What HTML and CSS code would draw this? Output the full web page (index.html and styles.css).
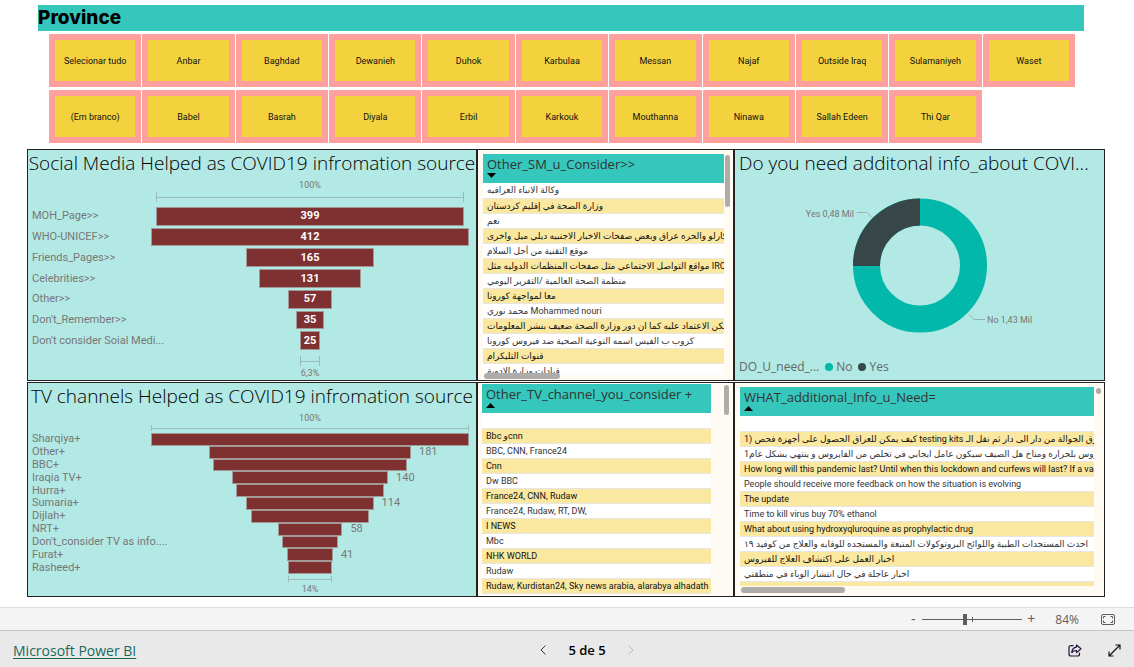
FILE: index.html
```html
<!DOCTYPE html>
<html lang="pt">
<head>
<meta charset="utf-8">
<title>Microsoft Power BI</title>
<link rel="stylesheet" href="styles.css">
</head>
<body>
<main class="report">
  <section class="slicer" aria-labelledby="slicer-title">
    <h1 class="slicer-title" id="slicer-title">Province</h1>
    <div class="tiles">
      <button class="tile">Selecionar tudo</button>
      <button class="tile">Anbar</button>
      <button class="tile">Baghdad</button>
      <button class="tile">Dewanieh</button>
      <button class="tile">Duhok</button>
      <button class="tile">Karbulaa</button>
      <button class="tile">Messan</button>
      <button class="tile">Najaf</button>
      <button class="tile">Outside Iraq</button>
      <button class="tile">Sulamaniyeh</button>
      <button class="tile">Waset</button>
      <button class="tile">(Em branco)</button>
      <button class="tile">Babel</button>
      <button class="tile">Basrah</button>
      <button class="tile">Diyala</button>
      <button class="tile">Erbil</button>
      <button class="tile">Karkouk</button>
      <button class="tile">Mouthanna</button>
      <button class="tile">Ninawa</button>
      <button class="tile">Sallah Edeen</button>
      <button class="tile">Thi Qar</button>
    </div>
  </section>

  <div class="board">
    <div class="column">
      <section class="panel chart">
        <h2 class="chart-title chart-title-center">Social Media Helped as COVID19 infromation source</h2>
        <div class="funnel funnel-social">
          <div class="scale"><span>100%</span><i class="ruler" style="width:96.8%"></i></div>
          <ul class="bars">
            <li><span class="name">MOH_Page&gt;&gt;</span><span class="track"><b class="bar" style="width:96.8%">399</b></span></li>
            <li><span class="name">WHO-UNICEF&gt;&gt;</span><span class="track"><b class="bar" style="width:100%">412</b></span></li>
            <li><span class="name">Friends_Pages&gt;&gt;</span><span class="track"><b class="bar" style="width:40%">165</b></span></li>
            <li><span class="name">Celebrities&gt;&gt;</span><span class="track"><b class="bar" style="width:31.8%">131</b></span></li>
            <li><span class="name">Other&gt;&gt;</span><span class="track"><b class="bar" style="width:13.8%">57</b></span></li>
            <li><span class="name">Don't_Remember&gt;&gt;</span><span class="track"><b class="bar" style="width:8.5%">35</b></span></li>
            <li><span class="name">Don't consider Soial Medi...</span><span class="track"><b class="bar" style="width:6.1%">25</b></span></li>
          </ul>
          <div class="scale"><i class="ruler" style="width:6.1%"></i><span>6,3%</span></div>
        </div>
      </section>

      <section class="panel chart">
        <h2 class="chart-title chart-title-center">TV channels Helped as COVID19 infromation source</h2>
        <div class="funnel funnel-tv">
          <div class="scale"><span>100%</span><i class="ruler" style="width:100%"></i></div>
          <ul class="bars">
            <li><span class="name">Sharqiya+</span><span class="track"><b class="bar" style="width:100%"></b></span></li>
            <li><span class="name">Other+</span><span class="track"><b class="bar" style="width:63.5%"><span class="value">181</span></b></span></li>
            <li><span class="name">BBC+</span><span class="track"><b class="bar" style="width:61%"></b></span></li>
            <li><span class="name">Iraqia TV+</span><span class="track"><b class="bar" style="width:49.1%"><span class="value">140</span></b></span></li>
            <li><span class="name">Hurra+</span><span class="track"><b class="bar" style="width:46.5%"></b></span></li>
            <li><span class="name">Sumaria+</span><span class="track"><b class="bar" style="width:40%"><span class="value">114</span></b></span></li>
            <li><span class="name">Dijlah+</span><span class="track"><b class="bar" style="width:37.2%"></b></span></li>
            <li><span class="name">NRT+</span><span class="track"><b class="bar" style="width:20.4%"><span class="value">58</span></b></span></li>
            <li><span class="name">Don't_consider TV as info....</span><span class="track"><b class="bar" style="width:17.5%"></b></span></li>
            <li><span class="name">Furat+</span><span class="track"><b class="bar" style="width:14.4%"><span class="value">41</span></b></span></li>
            <li><span class="name">Rasheed+</span><span class="track"><b class="bar" style="width:14%"></b></span></li>
          </ul>
          <div class="scale"><i class="ruler" style="width:14%"></i><span>14%</span></div>
        </div>
      </section>
    </div>

    <div class="column">
      <section class="panel list list-sm">
        <div class="viewport">
          <table class="grid">
            <thead><tr><th scope="col"><button class="sort">Other_SM_u_Consider&gt;&gt;<svg width="9" height="5" viewBox="0 0 9 5"><path d="M0 0h9L4.500 5z"/></svg></button></th></tr></thead>
            <tbody>
              <tr><td>وكالة الانباء العراقيه</td></tr>
              <tr><td>وزارة الصحة في إقليم كردستان</td></tr>
              <tr><td>نعم</td></tr>
              <tr><td>كارلو والحره عراق وبعض صفحات الاخبار الاجنبيه ديلي ميل واخرى</td></tr>
              <tr><td>موقع التقنية من أجل السلام</td></tr>
              <tr><td>مواقع التواصل الاجتماعي مثل صفحات المنظمات الدوليه مثل IRC</td></tr>
              <tr><td>منظمة الصحة العالمية /التقرير اليومي</td></tr>
              <tr><td>معا لمواجهة كورونا</td></tr>
              <tr><td>محمد نوري Mohammed nouri</td></tr>
              <tr><td>يمكن الاعتماد عليه كما ان دور وزارة الصحة ضعيف بنشر المعلومات</td></tr>
              <tr><td>كروب ب الفيس اسمه التوعية الصحية ضد فيروس كورونا</td></tr>
              <tr><td>قنوات التليكرام</td></tr>
              <tr><td>قيادات وزارة الادوية</td></tr>
            </tbody>
          </table>
        </div>
        <i class="thumb thumb-v"></i>
        <i class="thumb thumb-h"></i>
      </section>

      <section class="panel list list-tv">
        <div class="viewport">
          <table class="grid">
            <thead><tr><th scope="col"><button class="sort">Other_TV_channel_you_consider +<svg width="9" height="5" viewBox="0 0 9 5"><path d="M0 5h9L4.500 0z"/></svg></button></th></tr></thead>
            <tbody>
              <tr><td></td></tr>
              <tr><td>Bbc وcnn</td></tr>
              <tr><td>BBC, CNN, France24</td></tr>
              <tr><td>Cnn</td></tr>
              <tr><td>Dw BBC</td></tr>
              <tr><td>France24, CNN, Rudaw</td></tr>
              <tr><td>France24, Rudaw, RT, DW,</td></tr>
              <tr><td>I NEWS</td></tr>
              <tr><td>Mbc</td></tr>
              <tr><td>NHK WORLD</td></tr>
              <tr><td>Rudaw</td></tr>
              <tr><td>Rudaw, Kurdistan24, Sky news arabia, alarabya alhadath</td></tr>
            </tbody>
          </table>
        </div>
        <i class="thumb thumb-v"></i>
      </section>
    </div>

    <div class="column">
      <section class="panel chart">
        <h2 class="chart-title">Do you need additonal info_about COVI...</h2>
        <svg class="donut" viewBox="0 0 369 170" role="img" aria-label="No 1,43 Mil, Yes 0,48 Mil">
          <circle cx="185" cy="85" r="53.500" fill="none" stroke="#01b8aa" stroke-width="27"/>
          <path d="M185 18A67 67 0 0 0 118 85.500H145A40 40 0 0 1 185 45z" fill="#374649"/>
          <path d="M122 32h10l5 5M234 134l5 5h11" fill="none" stroke="#8fb5b2"/>
          <text x="119" y="36" text-anchor="end">Yes 0,48 Mil</text>
          <text x="252" y="142">No 1,43 Mil</text>
        </svg>
        <div class="legend">
          <span>DO_U_need_...</span>
          <span class="key"><i class="dot dot-no"></i>No</span>
          <span class="key"><i class="dot dot-yes"></i>Yes</span>
        </div>
      </section>

      <section class="panel list list-need">
        <div class="viewport">
          <table class="grid">
            <thead><tr><th scope="col"><button class="sort">WHAT_additional_Info_u_Need=<svg width="9" height="5" viewBox="0 0 9 5"><path d="M0 5h9L4.500 0z"/></svg></button></th></tr></thead>
            <tbody>
              <tr><td></td></tr>
              <tr><td>1) كيف يمكن للعراق الحصول على أجهزة فحص testing kits فرق الجوالة من دار الى دار ثم نقل الـ</td></tr>
              <tr><td>يروس بلحراره ومناخ هل الصيف سيكون عامل ايجابي في تخلص من الفايروس و ينتهي بشكل عام1</td></tr>
              <tr><td>How long will this pandemic last? Until when this lockdown and curfews will last? If a vac</td></tr>
              <tr><td>People should receive more feedback on how the situation is evolving</td></tr>
              <tr><td>The update</td></tr>
              <tr><td>Time to kill virus buy 70% ethanol</td></tr>
              <tr><td>What about using hydroxyqluroquine as prophylactic drug</td></tr>
              <tr><td>احدث المستجدات الطبية واللوائح البروتوكولات المتبعة والمستجده للوقايه والعلاج من كوفيد ١٩</td></tr>
              <tr><td>اخبار العمل على اكتشاف العلاج للفيروس</td></tr>
              <tr><td>اخبار عاجلة في حال انتشار الوباء في منطقتي</td></tr>
              <tr><td></td></tr>
            </tbody>
          </table>
        </div>
        <i class="thumb thumb-v"></i>
        <i class="thumb thumb-h"></i>
      </section>
    </div>
  </div>
</main>

<div class="statusbar">
  <div class="zoom">
    <button class="step" aria-label="Zoom out">-</button>
    <input class="slider" type="range" min="0" max="100" value="42" aria-label="Zoom">
    <button class="step" aria-label="Zoom in">+</button>
  </div>
  <span class="percent">84%</span>
  <button class="icon" aria-label="Fit to page">
    <svg width="14" height="11" viewBox="0 0 14 11" fill="none" stroke="#605e5c"><rect x=".5" y=".5" width="13" height="10" rx="1.500"/><path d="M2.500 4.500v-2h2M9.500 2.500h2v2M11.500 6.500v2h-2M4.500 8.500h-2v-2"/></svg>
  </button>
</div>

<footer class="footer">
  <div class="brand"><a href="#">Microsoft Power BI</a></div>
  <nav class="pager" aria-label="Pages">
    <button class="icon" aria-label="Previous page"><svg width="7" height="10" viewBox="0 0 7 10" fill="none" stroke="#333"><path d="M5.500 .5L1 5l4.500 4.500"/></svg></button>
    <span>5 de 5</span>
    <button class="icon" aria-label="Next page" disabled><svg width="7" height="10" viewBox="0 0 7 10" fill="none" stroke="#bbb"><path d="M1.500 .5L6 5 1.500 9.500"/></svg></button>
  </nav>
  <div class="actions">
    <button class="icon" aria-label="Share"><svg width="14" height="13" viewBox="0 0 14 13" fill="none" stroke="#24143a" stroke-width="1.200"><path d="M5.500 1.600H3A2 2 0 0 0 1 3.600V10a2 2 0 0 0 2 2h6.500a2 2 0 0 0 2-2V8.500"/><path d="M8.500 1l4.500 3.800-4.500 3.800V6.500C6.500 6.400 5 7 3.800 8.600 4 5.500 5.600 3.400 8.500 3.100z" stroke-linejoin="round"/></svg></button>
    <button class="icon" aria-label="Full screen"><svg width="13" height="13" viewBox="0 0 13 13" fill="none" stroke="#111" stroke-width="1.200"><path d="M1 12L12 1M7.500 1H12v4.500M1 7.500V12h4.500"/></svg></button>
  </div>
</footer>
</body>
</html>
```
FILE: styles.css
```css
* { box-sizing: border-box; }

body {
  margin: 0;
  min-height: 100vh;
  display: flex;
  flex-direction: column;
  background: #fff;
  color: #111;
  font-family: "Open Sans", "DejaVu Sans", sans-serif;
  font-size: 9px;
}

button {
  padding: 0;
  border: 0;
  background: none;
  color: inherit;
  font: inherit;
}

.report {
  flex: 1;
  display: flex;
  flex-direction: column;
  padding: 5px 29px 10px 27px;
}

/* Province slicer */
.slicer { margin: 0 21px 0 11px; }

.slicer-title {
  margin: 0;
  background: #35c6bc;
  color: #000;
  font: 800 19px/26px Inter, sans-serif;
}

.tiles {
  display: grid;
  grid-template-columns: repeat(11, 1fr);
  grid-auto-rows: 53px;
  gap: 3px 1px;
  margin: 3px 9px 6px 11px;
}

.tile {
  border: 6px solid #fea19e;
  background: #f4d23e;
  color: #111;
  font-family: Roboto, sans-serif;
}

/* Board of visuals */
.board {
  flex: 1;
  display: grid;
  grid-template-columns: 450fr 257fr 371fr;
}

.column {
  display: grid;
  grid-template-rows: minmax(0, 232fr) minmax(0, 215fr);
  grid-template-columns: minmax(0, 1fr);
  gap: 1px;
}

.panel {
  position: relative;
  display: flex;
  flex-direction: column;
  border: 1px solid #222;
}

.chart { background: #b3e9e4; }
.list { background: #fffbf2; }

.chart-title {
  margin: 0;
  padding: 0 4px;
  color: #000;
  font-size: 19px;
  font-weight: 300;
  line-height: 27px;
  white-space: nowrap;
}

.chart-title-center {
  padding: 0;
  text-align: center;
}

/* Funnels */
.funnel {
  flex: 1;
  display: flex;
  flex-direction: column;
  padding: 1px 7px 0 4px;
  color: #777;
  font-family: Roboto, sans-serif;
  font-size: 11px;
}

.scale {
  display: flex;
  flex-direction: column;
  align-items: center;
  margin-left: 119px;
  font-size: 9px;
  line-height: 14px;
}

.ruler {
  height: 10px;
  border: solid #9bbab8;
  border-width: 0 1px;
  background: linear-gradient(#9bbab8, #9bbab8) center / 100% 1px no-repeat;
}

.bars {
  flex: 1;
  display: flex;
  flex-direction: column;
  margin: 0;
  padding: 0;
  list-style: none;
}

.bars li {
  flex: 1;
  display: grid;
  grid-template-columns: 119px 1fr;
  align-items: center;
  line-height: 12px;
}

.name { white-space: nowrap; }

.track {
  display: flex;
  justify-content: center;
  align-self: stretch;
  padding: 1px 0;
}

.bar {
  position: relative;
  display: flex;
  align-items: center;
  justify-content: center;
  background: #7f3030;
  outline: 1px solid #a39a97;
  outline-offset: -1px;
  color: #fff;
}

.value {
  position: absolute;
  left: 100%;
  margin-left: 8px;
  color: #777;
  font-weight: 400;
}

.funnel-social .bars { margin: 4px 0 5px; }
.funnel-tv .bars { margin: 2px 0; }
.funnel-tv .track { padding: 0; }
.funnel-tv .ruler { height: 6px; }

/* Text lists */
.list-sm { padding: 4px 9px 5px 5px; }
.list-tv { padding: 1px 22px 2px 4px; }
.list-need { padding: 4px 10px 10px 5px; }

.viewport {
  flex: 1 1 0;
  min-height: 0;
  overflow: hidden;
}

.grid {
  width: 100%;
  table-layout: fixed;
  border-collapse: collapse;
}

.grid th {
  height: 29px;
  padding: 1px 4px 0;
  background: #35c6bc;
  text-align: left;
  vertical-align: top;
  font-weight: 400;
}

.sort {
  display: flex;
  flex-direction: column;
  color: #333;
  font-size: 13px;
  line-height: 18px;
}

.grid td {
  height: 15px;
  padding: 0 4px;
  border-bottom: 1px solid #e6e6e6;
  background: #fff;
  color: #333;
  font-family: Roboto, "DejaVu Sans", sans-serif;
  line-height: 14px;
  overflow: hidden;
  white-space: nowrap;
}

.grid tbody tr:nth-child(even) td {
  background: #fbe8a0;
  color: #111;
}

.thumb {
  position: absolute;
  border-radius: 3px;
  background: #aeacaa;
}

.thumb-v { width: 5px; right: 3px; top: 5px; height: 52px; }
.thumb-h { height: 6px; left: 6px; bottom: 1px; width: 76px; }
.list-tv .thumb-v { right: 4px; top: 2px; height: 30px; }
.list-need .thumb-v { height: 6px; }
.list-need .thumb-h { bottom: 3px; width: 104px; }

/* Donut */
.donut {
  flex: 1;
  min-height: 0;
  margin-bottom: 4px;
  font-family: Roboto, sans-serif;
  font-size: 9px;
  fill: #777;
}

.legend {
  display: flex;
  align-items: center;
  gap: 6px;
  padding: 0 4px 4px;
  color: #666;
  font-size: 12px;
  line-height: 18px;
}

.key {
  display: flex;
  align-items: center;
  gap: 3px;
}

.dot {
  width: 8px;
  height: 8px;
  border-radius: 50%;
}

.dot-no { background: #01b8aa; }
.dot-yes { background: #374649; }

/* Zoom bar */
.statusbar {
  display: flex;
  align-items: center;
  justify-content: flex-end;
  gap: 19px;
  height: 23px;
  padding-right: 19px;
  border-top: 1px solid #dcdcdc;
  background: #f4f4f4;
  color: #605e5c;
}

.zoom {
  display: flex;
  align-items: center;
  gap: 4px;
}

.step {
  width: 10px;
  font-size: 14px;
  line-height: 20px;
}

.slider {
  appearance: none;
  width: 100px;
  height: 12px;
  margin: 0;
  background:
    linear-gradient(#605e5c, #605e5c) 50% 50% / 1px 5px no-repeat,
    linear-gradient(#605e5c, #605e5c) center / 100% 1px no-repeat;
}

.slider::-webkit-slider-thumb {
  appearance: none;
  width: 4px;
  height: 11px;
  background: #605e5c;
}

.percent {
  margin-right: 3px;
  font-size: 12px;
}

.icon {
  display: flex;
  align-items: center;
}

/* Footer */
.footer {
  display: grid;
  grid-template-columns: 1fr auto 1fr;
  align-items: center;
  height: 37px;
  padding: 2px 13px 0;
  border-top: 1px solid #c4c4c4;
  background: #e9e9e9;
  font-size: 13px;
}

.brand a {
  color: #17695c;
  font-size: 14px;
  text-underline-offset: 2px;
}

.pager {
  display: flex;
  align-items: center;
  gap: 21px;
  margin-left: 40px;
  color: #000;
  font-weight: 600;
}

.actions {
  display: flex;
  justify-content: flex-end;
  gap: 26px;
}
```
